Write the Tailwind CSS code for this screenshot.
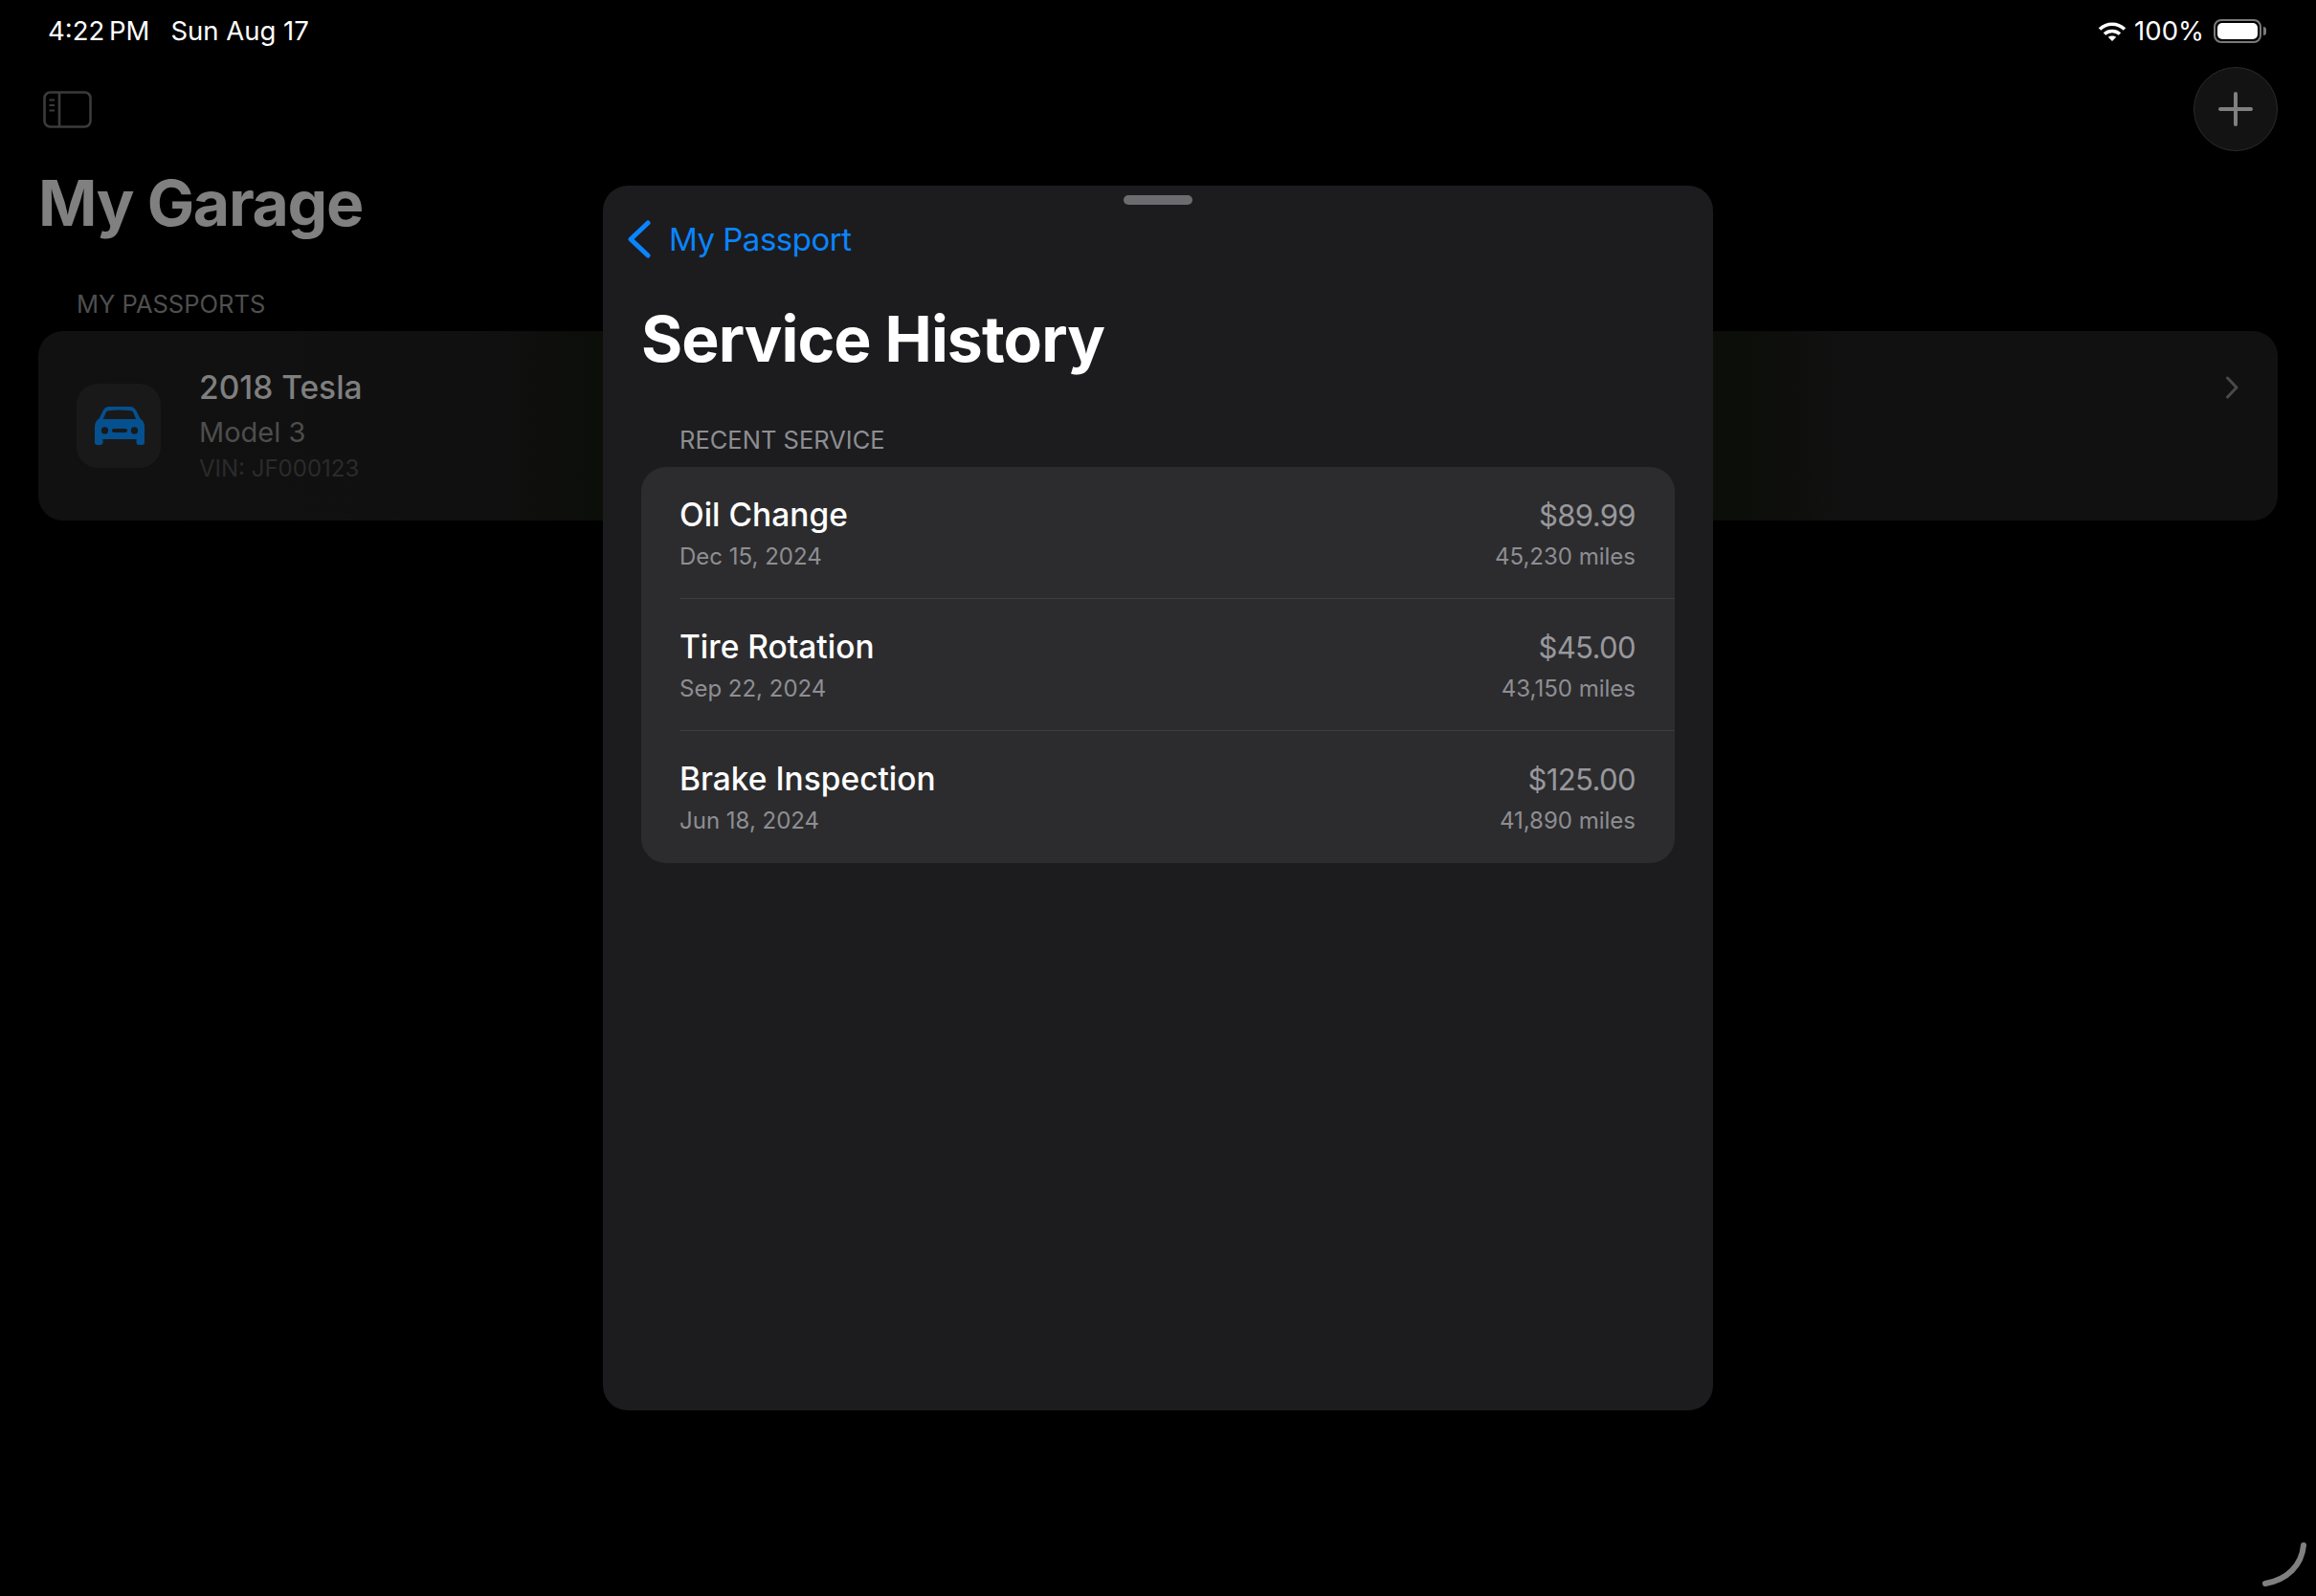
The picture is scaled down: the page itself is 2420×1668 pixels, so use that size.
<!DOCTYPE html>
<html lang="en">
<head>
    <meta charset="UTF-8">
    <title>Service History</title>
    <script src="https://cdn.jsdelivr.net/npm/@tailwindcss/browser@4"></script>
</head>
<body class="bg-black font-['Inter',sans-serif]">
    <div class="relative w-[2420px] h-[1668px] overflow-hidden bg-black">

        <!-- Status bar -->
        <div class="h-[64px] pt-[1px] pl-[50px] pr-[52px] flex items-center justify-between text-white text-[27.5px] leading-none">
            <div class="flex gap-[22px]">
                <span class="[word-spacing:-3px]">4:22 PM</span>
                <span>Sun Aug 17</span>
            </div>
            <div class="flex items-center">
                <svg class="w-[30px] h-[22px] mr-[8px]" viewBox="0 0 30 22" fill="none" stroke="white" stroke-width="3.6">
                    <path d="M2 8.5 C9.5 1.5 20.5 1.5 28 8.5"/>
                    <path d="M7 13.5 C11.5 9.5 18.5 9.5 23 13.5"/>
                    <path d="M15 21 L10.8 16.8 C13 14.9 17 14.9 19.2 16.8 Z" fill="white" stroke="none"/>
                </svg>
                <span class="mr-[10px]">100%</span>
                <div class="w-[50px] h-[25px] rounded-[8px] border-2 border-[#7a7a7a] p-[2px]">
                    <div class="w-full h-full rounded-[5px] bg-white"></div>
                </div>
                <div class="w-[3px] h-[9px] ml-[2px] rounded-r-full bg-[#7a7a7a]"></div>
            </div>
        </div>

        <!-- Toolbar -->
        <div class="h-[94px] pt-[6px] pl-[45px] pr-[40px] flex items-center justify-between">
            <svg class="w-[51px] h-[39px]" viewBox="0 0 51 39" fill="none" stroke="#3b3b3b" stroke-width="2.6">
                <rect x="1.5" y="1.5" width="48" height="36" rx="6"/>
                <path d="M17 1.5V37.5"/>
                <path d="M6.5 9.5H12M6.5 15H12M6.5 20.5H12" stroke-width="2"/>
            </svg>
            <div class="w-[88px] h-[88px] rounded-full bg-[#131313] border-[1.5px] border-[#2b2b2b] flex items-center justify-center">
                <svg class="w-[36px] h-[36px]" viewBox="0 0 36 36" stroke="#808080" stroke-width="4" stroke-linecap="round">
                    <path d="M2 18H34M18 2V34"/>
                </svg>
            </div>
        </div>

        <!-- Garage list behind the sheet -->
        <div class="pl-[40px] pr-[40px]">
            <h1 class="h-[98px] pt-[10px] flex items-center text-[66px] font-bold tracking-[-1.3px] text-[#808080] leading-none">My Garage</h1>
            <div class="h-[90px] pl-[40px] pt-[47px] text-[25.500px] leading-[30px] text-[#4f4f4f]">MY PASSPORTS</div>
            <div class="relative h-[198px] rounded-[26px] bg-[linear-gradient(90deg,#111111_0%,#101010_20%,#0c0e0a_25%,#0c0e0a_76%,#111111_81%,#111111_100%)] flex items-center pl-[40px] pr-[34px]">
                <div class="w-[88px] h-[88px] rounded-[22px] bg-[#191919] flex items-center justify-center mr-[40px]">
                    <svg class="w-[52px] h-[40px] ml-[1px]" viewBox="0 0 52 40" fill="#05508f">
                        <path fill-rule="evenodd" d="M15 0H37C40 0 42 1.5 43.5 4.5L47.5 12.5C50.5 14.5 52 17 52 21V37.5C52 39 51 40 49.5 40H46C44.5 40 43.5 39 43.5 37.5V34H8.5V37.5C8.5 39 7.5 40 6 40H2.500C1 40 0 39 0 37.500V21C0 17 1.500 14.500 4.500 12.500L8.500 4.500C10 1.500 12 0 15 0ZM14.500 4.200C13 4.200 12.300 5 11.600 6.400L8.800 13H43.200L40.400 6.400C39.700 5 39 4.200 37.500 4.200C30 3.300 22 3.300 14.500 4.200ZM10.500 21.300A3.600 3.600 0 1 0 10.500 28.500A3.600 3.600 0 1 0 10.500 21.300ZM41.500 21.300A3.600 3.600 0 1 0 41.500 28.500A3.600 3.600 0 1 0 41.500 21.300ZM20 23C18.800 23 18 23.800 18 25C18 26.200 18.800 27 20 27H32C33.200 27 34 26.200 34 25C34 23.800 33.200 23 32 23Z"/>
                    </svg>
                </div>
                <div class="flex-1">
                    <div class="text-[33.500px] leading-[40px] font-medium text-[#7f7f7f]">2018 Tesla</div>
                    <div class="text-[29px] leading-[38px] mt-[8px] text-[#4d4d4d]">Model 3</div>
                    <div class="text-[24px] leading-[30px] mt-[4px] text-[#2b2b2b]">VIN: JF000123</div>
                </div>
                <svg class="w-[14px] h-[24px] mr-[7px] -mt-[80px]" viewBox="0 0 14 24" fill="none" stroke="#4a4a4a" stroke-width="3" stroke-linecap="round" stroke-linejoin="round">
                    <path d="M2.500 2L12 12L2.500 22"/>
                </svg>
            </div>
        </div>

        <!-- Service history sheet -->
        <div class="absolute left-[630px] top-[194px] w-[1160px] h-[1280px] rounded-[26px] bg-[#1c1c1e] px-[40px]">
            <div class="absolute left-[544px] top-[10px] w-[72px] h-[10px] rounded-full bg-[#6c6c70]"></div>
            <div class="h-[116px] pt-[34px] -ml-[15px] flex items-start text-[#0a84ff]">
                <svg class="w-[26px] h-[40px] mr-[18px] mt-[2px]" viewBox="0 0 26 40" fill="none" stroke="#0a84ff" stroke-width="5" stroke-linecap="round" stroke-linejoin="round">
                    <path d="M22 3L4 20L22 37"/>
                </svg>
                <span class="text-[33px] leading-[42px] mt-[1px] tracking-[-0.5px]">My Passport</span>
            </div>
            <h2 class="h-[76px] pt-[12px] flex items-center text-[66px] font-bold tracking-[-0.9px] text-white leading-none">Service History</h2>
            <div class="h-[102px] pl-[40px] pt-[59px] text-[25.500px] leading-[30px] text-[#8e8e93]">RECENT SERVICE</div>
            <div class="rounded-[26px] bg-[#2c2c2e] overflow-hidden">
                <div class="h-[138px] ml-[40px] pr-[41px] border-b-[1.5px] border-[#3d3d3f] flex items-center justify-between">
                    <div>
                        <div class="text-[33.500px] leading-[42px] font-medium text-white">Oil Change</div>
                        <div class="text-[24px] leading-[30px] mt-[8px] text-[#8e8e93]">Dec 15, 2024</div>
                    </div>
                    <div class="text-right">
                        <div class="text-[31px] leading-[42px] mt-[1px] -mb-[1px] tracking-[-0.6px] text-[#98989d]">$89.99</div>
                        <div class="text-[24px] leading-[30px] mt-[8px] text-[#8e8e93]">45,230 miles</div>
                    </div>
                </div>
                <div class="h-[138px] ml-[40px] pr-[41px] border-b-[1.5px] border-[#3d3d3f] flex items-center justify-between">
                    <div>
                        <div class="text-[33.500px] leading-[42px] font-medium text-white">Tire Rotation</div>
                        <div class="text-[24px] leading-[30px] mt-[8px] text-[#8e8e93]">Sep 22, 2024</div>
                    </div>
                    <div class="text-right">
                        <div class="text-[31px] leading-[42px] mt-[1px] -mb-[1px] tracking-[-0.6px] text-[#98989d]">$45.00</div>
                        <div class="text-[24px] leading-[30px] mt-[8px] text-[#8e8e93]">43,150 miles</div>
                    </div>
                </div>
                <div class="h-[138px] ml-[40px] pr-[41px] flex items-center justify-between">
                    <div>
                        <div class="text-[33.500px] leading-[42px] font-medium text-white">Brake Inspection</div>
                        <div class="text-[24px] leading-[30px] mt-[8px] text-[#8e8e93]">Jun 18, 2024</div>
                    </div>
                    <div class="text-right">
                        <div class="text-[31px] leading-[42px] mt-[1px] -mb-[1px] tracking-[-0.6px] text-[#98989d]">$125.00</div>
                        <div class="text-[24px] leading-[30px] mt-[8px] text-[#8e8e93]">41,890 miles</div>
                    </div>
                </div>
            </div>
        </div>

        <!-- Pencil scribble indicator -->
        <svg class="absolute left-[2360px] top-[1608px] w-[56px] h-[54px]" viewBox="0 0 56 54" fill="none" stroke="#808080" stroke-width="6" stroke-linecap="round">
            <path d="M47 7C45 28 30 43 7 47"/>
        </svg>
    </div>
</body>
</html>
